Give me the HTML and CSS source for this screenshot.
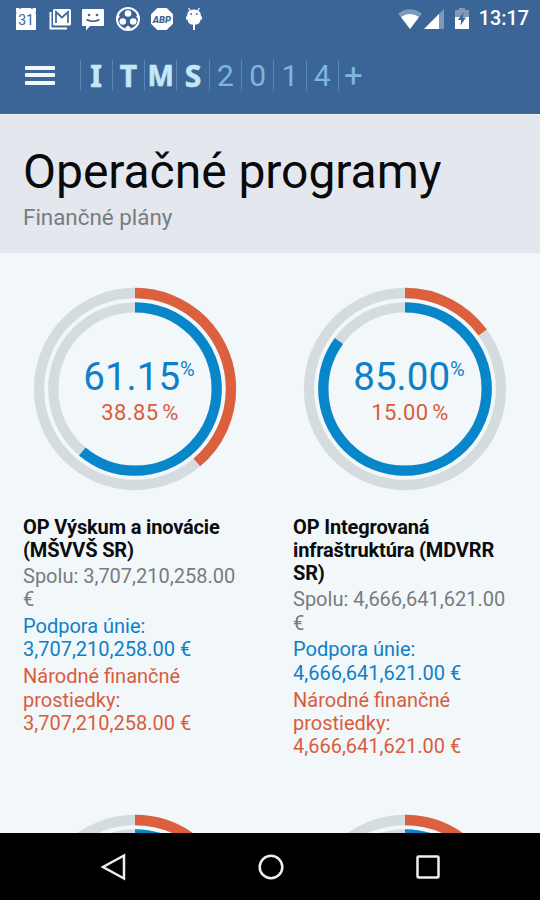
FILE: index.html
```html
<!DOCTYPE html>
<html lang="sk">
<head>
    <meta charset="UTF-8">
    <meta name="viewport" content="width=device-width, initial-scale=1.0">
    <title>ITMS2014+ Operačné programy</title>
    <link rel="stylesheet" href="styles.css">
</head>
<body>
    <header class="app-header">
        <div class="status-bar">
            <div class="notifications">
                <!-- calendar -->
                <svg width="24" height="24" viewBox="0 0 24 24">
                    <path d="M2 1h3l1 1.500 1-1.500h10l1 1.500 1-1.500h3v4l-.7 1 .7 1v16H2V7l.7-1L2 5z" fill="#fff"/>
                    <text x="12" y="18" text-anchor="middle" class="icon-date">31</text>
                </svg>
                <!-- mail -->
                <svg width="24" height="24" viewBox="0 0 24 24">
                    <path d="M2.500 5v16.500H19" fill="none" stroke="#fff" stroke-width="2"/>
                    <rect x="5" y="2" width="18" height="16.500" rx="1.500" fill="#fff"/>
                    <path d="M8 16V5l6 5.500L20 5v11" fill="none" stroke="#3b6596" stroke-width="1.700"/>
                </svg>
                <!-- message -->
                <svg width="24" height="24" viewBox="0 0 24 24">
                    <path d="M2 2h20q1 0 1 1v15q0 1-1 1H9l-4 4.500V19H2q-1 0-1-1V3q0-1 1-1z" fill="#fff"/>
                    <circle cx="8" cy="8" r="1.300" fill="#3b6596"/>
                    <circle cx="16" cy="8" r="1.300" fill="#3b6596"/>
                    <path d="M5.500 12.500q6.500 3.500 13 0" fill="none" stroke="#3b6596" stroke-width="1.700"/>
                </svg>
                <!-- football -->
                <svg width="26" height="26" viewBox="0 0 26 26">
                    <circle cx="13" cy="13" r="11" fill="none" stroke="#fff" stroke-width="2"/>
                    <g fill="#fff">
                        <circle cx="13" cy="7.500" r="3.300"/>
                        <circle cx="7.800" cy="15.500" r="3.300"/>
                        <circle cx="18.200" cy="15.500" r="3.300"/>
                        <path d="M10 22l3-2.500 3 2.500-3 1.500zM2.500 9l2.500 1-2 3zM23.500 9L21 10l2 3z"/>
                    </g>
                </svg>
                <!-- adblock -->
                <svg width="24" height="24" viewBox="0 0 24 24">
                    <path d="M7.300 1h9.400L23 7.300v9.400L16.700 23H7.300L1 16.700V7.300z" fill="#fff"/>
                    <text x="11.800" y="15.500" text-anchor="middle" class="icon-abp">ABP</text>
                </svg>
                <!-- android -->
                <svg width="20" height="24" viewBox="0 0 18 24">
                    <path d="M5.500 4L3.500 1M12.500 4l2-3" stroke="#fff" stroke-width="1.200"/>
                    <path d="M2 9q0-6.500 7-6.500T16 9q0 7-4 8.500H6Q2 16 2 9z" fill="#fff"/>
                    <path d="M9 17v6M2 9.500v3M16 9.500v3" stroke="#fff" stroke-width="2"/>
                    <circle cx="6.200" cy="7" r=".9" fill="#3b6596"/>
                    <circle cx="11.800" cy="7" r=".9" fill="#3b6596"/>
                </svg>
            </div>
            <div class="system">
                <svg class="wifi" width="24" height="20" viewBox="0 0 24 20">
                    <path d="M0 4.500Q12-4 24 4.500L12 20z" fill="#7d9abb"/>
                    <path d="M3 8q9-6 18 0L12 20z" fill="#fff"/>
                </svg>
                <svg class="signal" width="20" height="20" viewBox="0 0 20 20">
                    <path d="M20 0v20H0z" fill="#7d9abb"/>
                    <path d="M15 5v15H0z" fill="#fff"/>
                </svg>
                <svg class="battery" width="14" height="21" viewBox="0 0 14 21">
                    <path d="M4 0h6v2h4v8H0V2h4z" fill="#7d9abb"/>
                    <path d="M0 9h14v12H0z" fill="#fff"/>
                    <path d="M8.500 4L3 12h3.200L5.500 17.500 11 9.500H7.800z" fill="#3b6596"/>
                </svg>
                <span class="clock">13:17</span>
            </div>
        </div>
        <div class="toolbar">
            <div class="menu">
                <span></span>
                <span></span>
                <span></span>
            </div>
            <div class="logo">
                <b>I</b><b>T</b><b class="wide">M</b><b>S</b><i>2</i><i>0</i><i>1</i><i>4</i><i class="plus">+</i>
            </div>
        </div>
    </header>

    <section class="page-title">
        <h1>Operačné programy</h1>
        <p>Finančné plány</p>
    </section>

    <main class="programs">
        <article class="program">
            <div class="chart">
                <svg width="204" height="204" viewBox="-102 -102 204 204">
                    <g fill="none" stroke-width="10.300">
                        <circle r="96" stroke="#d5dce0"/>
                        <circle r="81.700" stroke="#d5dce0"/>
                        <circle r="96" pathLength="100" stroke="#dc5f3e" stroke-dasharray="38.85 100" transform="rotate(-90)"/>
                        <circle r="81.700" pathLength="100" stroke="#0786c9" stroke-dasharray="61.15 100" transform="rotate(-90)"/>
                    </g>
                </svg>
                <div class="values">
                    <div class="eu">61.15<sup>%</sup></div>
                    <div class="national">38.85 %</div>
                </div>
            </div>
            <h2>OP Výskum a inovácie (MŠVVŠ SR)</h2>
            <p>Spolu: 3,707,210,258.00 €</p>
            <p class="blue">Podpora únie: 3,707,210,258.00 €</p>
            <p class="red">Národné finančné prostiedky: 3,707,210,258.00 €</p>
        </article>

        <article class="program">
            <div class="chart">
                <svg width="204" height="204" viewBox="-102 -102 204 204">
                    <g fill="none" stroke-width="10.300">
                        <circle r="96" stroke="#d5dce0"/>
                        <circle r="81.700" stroke="#d5dce0"/>
                        <circle r="96" pathLength="100" stroke="#dc5f3e" stroke-dasharray="15 100" transform="rotate(-90)"/>
                        <circle r="81.700" pathLength="100" stroke="#0786c9" stroke-dasharray="85 100" transform="rotate(-90)"/>
                    </g>
                </svg>
                <div class="values">
                    <div class="eu">85.00<sup>%</sup></div>
                    <div class="national">15.00 %</div>
                </div>
            </div>
            <h2>OP Integrovaná infraštruktúra (MDVRR SR)</h2>
            <p>Spolu: 4,666,641,621.00 €</p>
            <p class="blue">Podpora únie: 4,666,641,621.00 €</p>
            <p class="red">Národné finančné prostiedky: 4,666,641,621.00 €</p>
        </article>

        <article class="program">
            <div class="chart">
                <svg width="204" height="204" viewBox="-102 -102 204 204">
                    <g fill="none" stroke-width="10.300">
                        <circle r="96" stroke="#d5dce0"/>
                        <circle r="81.700" stroke="#d5dce0"/>
                        <circle r="96" pathLength="100" stroke="#dc5f3e" stroke-dasharray="20 100" transform="rotate(-90)"/>
                        <circle r="81.700" pathLength="100" stroke="#0786c9" stroke-dasharray="80 100" transform="rotate(-90)"/>
                    </g>
                </svg>
            </div>
        </article>

        <article class="program">
            <div class="chart">
                <svg width="204" height="204" viewBox="-102 -102 204 204">
                    <g fill="none" stroke-width="10.300">
                        <circle r="96" stroke="#d5dce0"/>
                        <circle r="81.700" stroke="#d5dce0"/>
                        <circle r="96" pathLength="100" stroke="#dc5f3e" stroke-dasharray="20 100" transform="rotate(-90)"/>
                        <circle r="81.700" pathLength="100" stroke="#0786c9" stroke-dasharray="80 100" transform="rotate(-90)"/>
                    </g>
                </svg>
            </div>
        </article>
    </main>

    <nav class="nav-bar">
        <svg width="28" height="28" viewBox="0 0 28 28">
            <path d="M25 2.500v23L4 14z"/>
        </svg>
        <svg width="28" height="28" viewBox="0 0 28 28">
            <circle cx="14" cy="14" r="11.300"/>
        </svg>
        <svg width="28" height="28" viewBox="0 0 28 28">
            <rect x="3.500" y="3.500" width="21" height="21" rx="1"/>
        </svg>
    </nav>
</body>
</html>
```
FILE: styles.css
```css
* {
    box-sizing: border-box;
}
body {
    display: flex;
    flex-direction: column;
    width: 540px;
    height: 900px;
    margin: 0;
    overflow: hidden;
    background-color: #f2f7fa;
    font-family: Roboto, sans-serif;
}
h1, h2, p {
    margin: 0;
}
.app-header {
    flex: none;
    height: 114px;
    background-color: #3b6596;
}
.status-bar {
    display: flex;
    justify-content: space-between;
    align-items: center;
    height: 37px;
    padding: 0 11px 0 14px;
}
.notifications {
    display: flex;
    align-items: center;
    gap: 9.500px;
}
.icon-date {
    font-size: 14px;
    fill: #3b6596;
}
.icon-abp {
    font-size: 9.500px;
    font-weight: 900;
    font-style: italic;
    fill: #3b6596;
}
.system {
    display: flex;
    align-items: center;
}
.signal {
    margin-left: 2px;
}
.battery {
    margin-left: 11px;
}
.clock {
    margin-left: 10px;
    color: #fff;
    font-size: 19.800px;
    font-weight: 500;
}
.toolbar {
    display: flex;
    align-items: center;
    height: 76px;
    padding-left: 25px;
}
.menu {
    display: flex;
    flex-direction: column;
    gap: 3.500px;
    width: 30px;
}
.menu span {
    height: 4px;
    background-color: #f3f7fa;
    border-radius: 1px;
}
.logo {
    display: flex;
    margin-left: 24.500px;
}
.logo b, .logo i {
    width: 32.300px;
    height: 31px;
    border-left: 1px solid #5586b5;
    text-align: center;
    font-style: normal;
    line-height: 31px;
}
.logo b {
    color: #c4e7f8;
    font-family: "Noto Sans", sans-serif;
    font-size: 30px;
    font-weight: 700;
    -webkit-text-stroke: .6px #c4e7f8;
}
.logo .wide {
    font-size: 28px;
}
.logo i {
    color: #7db6de;
    font-size: 30px;
}
.logo .plus {
    text-align: left;
    padding-left: 5px;
    font-size: 33px;
}
.page-title {
    flex: none;
    height: 139px;
    padding: 29px 23px 0;
    background-color: #e4e7ee;
    border-top: 1px solid #f0f3f7;
}
.page-title h1 {
    color: #080a0c;
    font-size: 48px;
    font-weight: 400;
    line-height: 56px;
    letter-spacing: -.05px;
}
.page-title p {
    color: #777c81;
    font-size: 22.400px;
    line-height: 34px;
}
.programs {
    flex: 1;
    display: grid;
    grid-template-columns: 1fr 1fr;
    grid-auto-rows: 527px;
    min-height: 0;
    overflow: hidden;
    padding-top: 33.500px;
}
.program {
    padding: 0 23px;
    color: #777c80;
    font-size: 20px;
    line-height: 23.300px;
}
.chart {
    display: grid;
    justify-items: center;
    align-items: center;
    margin-bottom: 25px;
}
.chart svg, .values {
    grid-area: 1 / 1;
}
.values {
    padding: 4px 0 0 8px;
    text-align: center;
}
.eu {
    color: #0f7fc8;
    font-size: 38.500px;
    line-height: 44px;
    white-space: nowrap;
}
.eu sup {
    font-size: 20px;
    line-height: 0;
}
.national {
    padding-left: 2px;
    color: #d95d3c;
    font-size: 22px;
    line-height: 28px;
    letter-spacing: .4px;
    word-spacing: -2px;
}
.program h2 {
    margin-bottom: 3px;
    color: #0a0c0e;
    font-size: 20px;
    font-weight: 700;
    line-height: 23.300px;
    letter-spacing: -.15px;
}
.program p {
    margin-bottom: 3.500px;
}
.program .blue {
    color: #0f7fc8;
}
.program .red {
    color: #d95d3c;
}
.nav-bar {
    flex: none;
    display: flex;
    justify-content: space-between;
    align-items: center;
    height: 67px;
    padding: 0 98px 0 99px;
    background-color: #000;
}
.nav-bar svg {
    fill: none;
    stroke: #eee;
    stroke-width: 2.500;
}
```
